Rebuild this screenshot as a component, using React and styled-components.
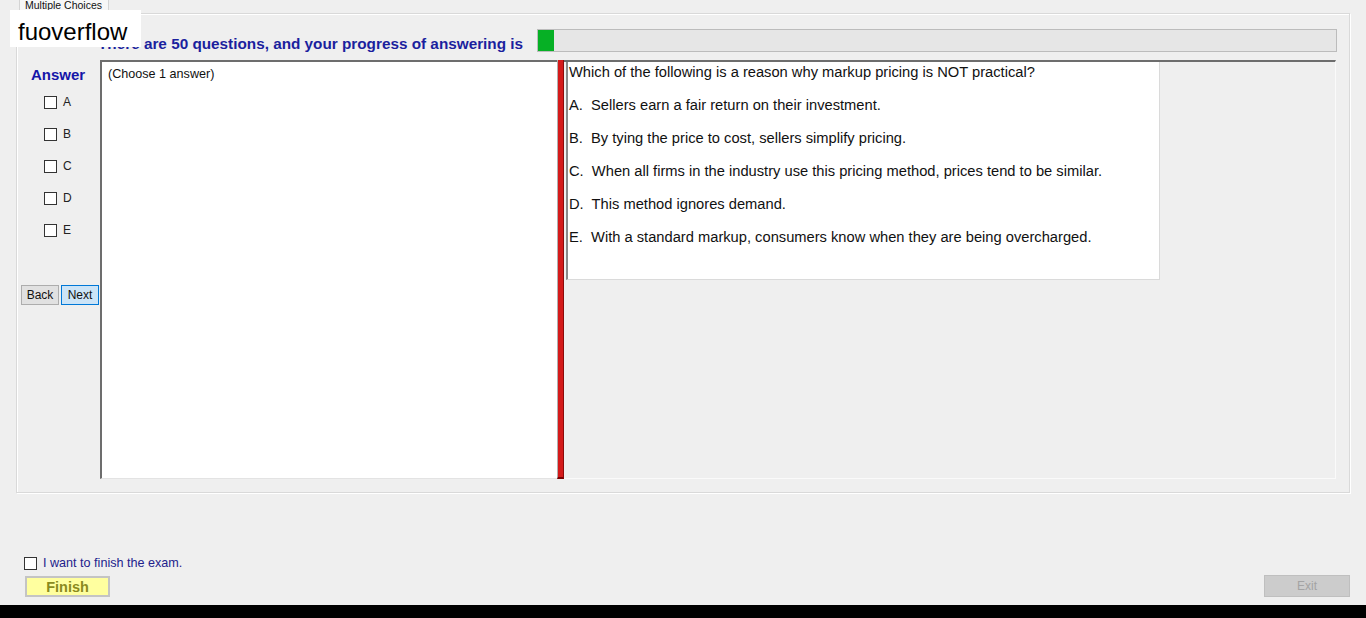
import React from 'react';
import styled, { createGlobalStyle } from 'styled-components';

const GlobalStyle = createGlobalStyle`
  html, body {
    margin: 0;
    padding: 0;
    background: #efefef;
    font-family: "Liberation Sans", Arial, sans-serif;
  }
`;

const Screen = styled.div`
  position: relative;
  height: 100vh;
  min-height: 618px;
  display: flex;
  flex-direction: column;
  background: #efefef;
  overflow: hidden;
`;

// the site watermark laid over the title
const Watermark = styled.div`
  position: absolute;
  left: 10px;
  top: 10px;
  width: 131px;
  height: 37px;
  box-sizing: border-box;
  padding: 6px 0 0 8px;
  background: #fff;
  color: #000;
  font-size: 24px;
  line-height: 31px;
  z-index: 2;
`;

const TabStrip = styled.div`
  height: 13px;
  display: flex;
  padding-left: 19px;
`;

const Tab = styled.div`
  height: 13px;
  box-sizing: border-box;
  padding: 0 6px 0 5px;
  border-right: 1px solid #d4d4d4;
  border-left: 1px solid #d4d4d4;
  background: #f7f7f7;
  color: #111;
  font-size: 10.5px;
  line-height: 11px;
  overflow: hidden;
`;

const TabPage = styled.div`
  height: 480px;
  margin: 0 16px;
  box-sizing: border-box;
  padding: 15px 13px 13px 3px;
  border: 1px solid #d9d9d9;
  box-shadow: inset 1px 1px 0 #fff, 1px 1px 0 #fff;
  display: flex;
  flex-direction: column;
`;

const Header = styled.div`
  height: 23px;
  display: flex;
  padding-left: 78px;
`;

const Title = styled.div`
  flex: 0 0 439px;
  box-sizing: border-box;
  padding-top: 6px;
  color: #1b1f9e;
  font-size: 15.3px;
  font-weight: bold;
  line-height: 18px;
  white-space: nowrap;
`;

const Progress = styled.div`
  flex: 0 0 800px;
  box-sizing: border-box;
  border: 1px solid #bcbcbc;
  background: #e6e6e6;
  display: flex;
`;

const ProgressFill = styled.div`
  background: #06b025;
`;

const Main = styled.div`
  height: 419px;
  margin-top: 8px;
  display: flex;
`;

const AnswerColumn = styled.div`
  flex: 0 0 80px;
  display: flex;
  flex-direction: column;
`;

const AnswerLabel = styled.div`
  margin-top: 6px;
  padding-left: 11px;
  color: #1515a8;
  font-size: 15px;
  font-weight: bold;
  line-height: 18px;
`;

const ChoiceRow = styled.label`
  height: 32px;
  display: flex;
  align-items: center;
  gap: 6px;
  padding-left: 24px;
  color: #222;
  font-size: 12px;
  &:first-of-type {
    margin-top: 2px;
  }
`;

const Box = styled.span`
  width: 13px;
  height: 13px;
  box-sizing: border-box;
  border: 1px solid #333;
  background: #fff;
  flex: 0 0 auto;
`;

const NavRow = styled.div`
  display: flex;
  gap: 2px;
  margin-top: 39px;
  padding-left: 1px;
`;

const NavButton = styled.button`
  width: 38px;
  height: 20px;
  padding: 0;
  box-sizing: border-box;
  border: 1px solid ${(p) => (p.$primary ? '#0078d7' : '#adadad')};
  background: ${(p) => (p.$primary ? '#cce4f7' : '#e1e1e1')};
  color: #111;
  font-family: inherit;
  font-size: 12px;
`;

const ChoiceBox = styled.div`
  flex: 0 0 457px;
  box-sizing: border-box;
  padding: 5px 0 0 6px;
  background: #fff;
  border-top: 2px solid #6d6d6d;
  border-left: 2px solid #6d6d6d;
  border-bottom: 1px solid #e3e3e3;
  color: #111;
  font-size: 12.6px;
  line-height: 14px;
`;

const Splitter = styled.div`
  flex: 0 0 7px;
  box-sizing: border-box;
  background: #d41a1a;
  border-left: 1px solid #b0b0b0;
  border-right: 1px solid #8c0a0a;
  border-bottom: 2px solid #7a0000;
`;

const QuestionPanel = styled.div`
  flex: 1;
  box-sizing: border-box;
  padding-left: 2px;
  border-top: 2px solid #6d6d6d;
  border-right: 1px solid #fafafa;
  border-bottom: 1px solid #fafafa;
`;

const QuestionBox = styled.div`
  width: 594px;
  height: 218px;
  box-sizing: border-box;
  padding-left: 1px;
  background: #fff;
  border-left: 2px solid #8a8a8a;
  border-right: 1px solid #dadada;
  border-bottom: 1px solid #dadada;
  color: #111;
  font-size: 14.7px;
`;

const Question = styled.div`
  line-height: 20px;
  padding-bottom: 7px;
`;

const Option = styled.div`
  line-height: 33px;
  white-space: pre;
`;

const Footer = styled.div`
  flex: 1;
  display: flex;
  align-items: flex-end;
  justify-content: space-between;
  padding: 0 16px 8px 24px;
`;

const FinishGroup = styled.div`
  display: flex;
  flex-direction: column;
`;

const ConfirmRow = styled.label`
  height: 16px;
  display: flex;
  align-items: center;
  gap: 6px;
  margin-bottom: 5px;
  color: #22228c;
  font-size: 12.6px;
`;

const FinishButton = styled.button`
  width: 85px;
  height: 21px;
  margin-left: 1px;
  padding: 0;
  box-sizing: border-box;
  border: 2px solid #c4c4c4;
  background: #ffff9f;
  color: #8a8a1e;
  font-family: inherit;
  font-size: 14.5px;
  font-weight: bold;
`;

const ExitButton = styled.button`
  width: 86px;
  height: 22px;
  padding: 0;
  box-sizing: border-box;
  border: 1px solid #bfbfbf;
  background: #cccccc;
  color: #a3a3a3;
  font-family: inherit;
  font-size: 12px;
`;

const BlackBar = styled.div`
  height: 13px;
  background: #000;
`;

const letters = ['A', 'B', 'C', 'D', 'E'];

const options = [
  'A.  Sellers earn a fair return on their investment.',
  'B.  By tying the price to cost, sellers simplify pricing.',
  'C.  When all firms in the industry use this pricing method, prices tend to be similar.',
  'D.  This method ignores demand.',
  'E.  With a standard markup, consumers know when they are being overcharged.',
];

const answered = 1;
const total = 50;

export default function App() {
  return (
    <Screen>
      <GlobalStyle />
      <Watermark>fuoverflow</Watermark>
      <TabStrip>
        <Tab>Multiple Choices</Tab>
      </TabStrip>
      <TabPage>
        <Header>
          <Title>There are {total} questions, and your progress of answering is</Title>
          <Progress>
            <ProgressFill style={{ width: `${(answered / total) * 100}%` }} />
          </Progress>
        </Header>
        <Main>
          <AnswerColumn>
            <AnswerLabel>Answer</AnswerLabel>
            {letters.map((l) => (
              <ChoiceRow key={l}>
                <Box />
                {l}
              </ChoiceRow>
            ))}
            <NavRow>
              <NavButton>Back</NavButton>
              <NavButton $primary>Next</NavButton>
            </NavRow>
          </AnswerColumn>
          <ChoiceBox>(Choose 1 answer)</ChoiceBox>
          <Splitter />
          <QuestionPanel>
            <QuestionBox>
              <Question>Which of the following is a reason why markup pricing is NOT practical?</Question>
              {options.map((o) => (
                <Option key={o}>{o}</Option>
              ))}
            </QuestionBox>
          </QuestionPanel>
        </Main>
      </TabPage>
      <Footer>
        <FinishGroup>
          <ConfirmRow>
            <Box />
            I want to finish the exam.
          </ConfirmRow>
          <FinishButton>Finish</FinishButton>
        </FinishGroup>
        <ExitButton disabled>Exit</ExitButton>
      </Footer>
      <BlackBar />
    </Screen>
  );
}
